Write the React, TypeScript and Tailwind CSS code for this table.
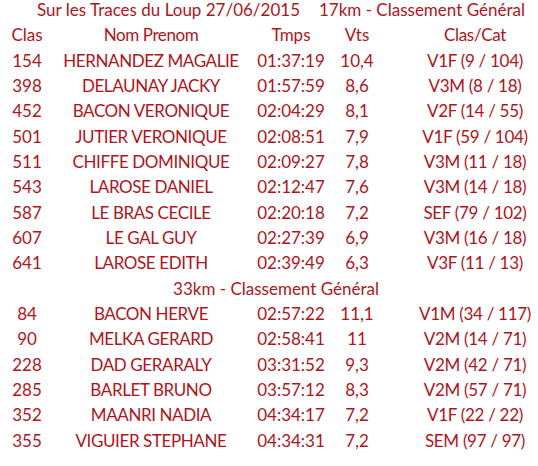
import React from "react";

type Row = [string, string, string, string, string];

const r17: Row[] = [
  ["154", "HERNANDEZ MAGALIE", "01:37:19", "10,4", "V1F (9 / 104)"],
  ["398", "DELAUNAY JACKY", "01:57:59", "8,6", "V3M (8 / 18)"],
  ["452", "BACON VERONIQUE", "02:04:29", "8,1", "V2F (14 / 55)"],
  ["501", "JUTIER VERONIQUE", "02:08:51", "7,9", "V1F (59 / 104)"],
  ["511", "CHIFFE DOMINIQUE", "02:09:27", "7,8", "V3M (11 / 18)"],
  ["543", "LAROSE DANIEL", "02:12:47", "7,6", "V3M (14 / 18)"],
  ["587", "LE BRAS CECILE", "02:20:18", "7,2", "SEF (79 / 102)"],
  ["607", "LE GAL GUY", "02:27:39", "6,9", "V3M (16 / 18)"],
  ["641", "LAROSE EDITH", "02:39:49", "6,3", "V3F (11 / 13)"],
];

const r33: Row[] = [
  ["84", "BACON HERVE", "02:57:22", "11,1", "V1M (34 / 117)"],
  ["90", "MELKA GERARD", "02:58:41", "11", "V2M (14 / 71)"],
  ["228", "DAD GERARALY", "03:31:52", "9,3", "V2M (42 / 71)"],
  ["285", "BARLET BRUNO", "03:57:12", "8,3", "V2M (57 / 71)"],
  ["352", "MAANRI NADIA", "04:34:17", "7,2", "V1F (22 / 22)"],
  ["355", "VIGUIER STEPHANE", "04:34:31", "7,2", "SEM (97 / 97)"],
];

function Cells({ row }: { row: Row }) {
  return (
    <>
      <div className="flex justify-center whitespace-nowrap">{row[0]}</div>
      <div className="flex justify-center whitespace-nowrap tracking-[-0.4px]">{row[1]}</div>
      <div className="flex justify-center whitespace-nowrap">{row[2]}</div>
      <div className="flex justify-center whitespace-nowrap">{row[3]}</div>
      <div className="flex justify-center whitespace-nowrap pl-[32px] tracking-[-0.3px]">{row[4]}</div>
    </>
  );
}

export default function App() {
  return (
    <div
      className="w-[538px] h-[466px] bg-white overflow-hidden text-[#b0141c] text-[17px] leading-[20px]"
      style={{ fontFamily: "Lato, 'Open Sans', sans-serif" }}
    >
      <div className="grid grid-cols-[54px_194px_86px_46px_158px] auto-rows-[25.33px]">
        <div className="col-span-5 flex justify-center gap-[19px] whitespace-nowrap pl-[24px]">
          <span>Sur les Traces du Loup 27/06/2015</span>
          <span>17km - Classement Général</span>
        </div>
        <Cells row={["Clas", "Nom Prenom", "Tmps", "Vts", "Clas/Cat"]} />
        {r17.map((r) => (
          <Cells key={r[0]} row={r} />
        ))}
        <div className="col-span-5 flex justify-center whitespace-nowrap pl-[14px]">
          33km - Classement Général
        </div>
        {r33.map((r) => (
          <Cells key={r[0]} row={r} />
        ))}
      </div>
    </div>
  );
}
